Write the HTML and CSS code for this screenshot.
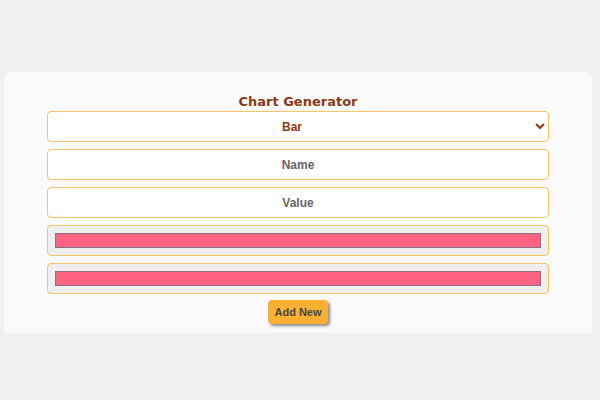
FILE: index.html
```html
<!DOCTYPE html>
<html lang="en">
<head>
    <meta charset="UTF-8">
    <meta name="viewport" content="width=device-width, initial-scale=1.0">
    <title>Chart Generator</title>
    <link rel="stylesheet" href="styles.css">
</head>
<body>
    <div class="card">
        <h1>Chart Generator</h1>
        <form class="chart-form">
            <select class="field">
                <option>Bar</option>
                <option>Line</option>
                <option>Pie</option>
            </select>
            <input class="field" type="text" placeholder="Name">
            <input class="field" type="text" placeholder="Value">
            <input class="field color-field" type="color" value="#ff6384">
            <input class="field color-field" type="color" value="#ff6384">
            <button type="button" class="add-btn">Add New</button>
        </form>
    </div>
</body>
</html>
```

FILE: styles.css
```css
body {
    font-family: 'Liberation Sans', Arial, sans-serif;
    margin: 0;
    padding: 72px 8px 0 4px;
    height: 400px;
    box-sizing: border-box;
    background: #f0f0f0;
    overflow: hidden;
}
.card {
    background-color: #fafafa;
    border-radius: 6px 6px 0 0;
    height: 261px;
    padding: 22px 0 0;
    box-sizing: border-box;
}
h1 {
    font-family: 'Comic Sans MS', 'DejaVu Sans', sans-serif;
    font-size: 13px;
    font-weight: bold;
    color: #8b3a1a;
    text-align: center;
    margin: 0 0 1px;
    line-height: 16px;
}
.chart-form {
    display: flex;
    flex-direction: column;
    align-items: center;
    gap: 7px;
}
.field {
    width: 502px;
    height: 31px;
    box-sizing: border-box;
    border: 1px solid #f5c566;
    border-radius: 4px;
    background: #fff;
    font-family: 'Liberation Sans', Arial, sans-serif;
    font-size: 12px;
    font-weight: bold;
    text-align: center;
    color: #8b3a1a;
    margin: 0;
}
select.field {
    text-align-last: center;
    padding: 0 4px;
}
.field::placeholder {
    color: #666;
}
.color-field {
    background: #efefef;
    padding: 7px 7px;
    cursor: pointer;
}
.color-field::-webkit-color-swatch-wrapper {
    padding: 0;
}
.color-field::-webkit-color-swatch {
    border: 1px solid #8a7080;
    border-radius: 0;
}
.add-btn {
    margin-top: -1px;
    background-color: #fbb034;
    color: #444;
    border: none;
    border-radius: 4px;
    padding: 0 6px;
    height: 24px;
    font-family: 'Liberation Sans', Arial, sans-serif;
    font-size: 11px;
    font-weight: bold;
    box-shadow: 2px 2px 3px rgba(0, 0, 0, 0.45);
    cursor: pointer;
}
```
